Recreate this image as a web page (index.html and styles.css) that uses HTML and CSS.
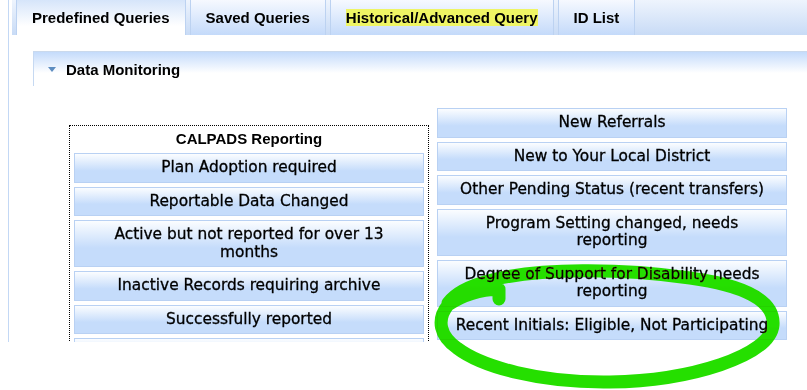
FILE: index.html
```html
<!DOCTYPE html>
<html lang="en">
<head>
    <meta charset="UTF-8">
    <meta name="viewport" content="width=device-width, initial-scale=1.0">
    <title>Predefined Queries</title>
    <link rel="stylesheet" href="styles.css">
</head>
<body>
    <div class="page">
        <div class="panel">
            <ul class="tabs">
                <li class="tab active">Predefined Queries</li>
                <li class="tab">Saved Queries</li>
                <li class="tab"><span class="mark">Historical/Advanced Query</span></li>
                <li class="tab">ID List</li>
            </ul>
            <div class="section-head"><span class="caret"></span>Data Monitoring</div>
            <div class="section-body">
                <div class="query-box">
                    <div class="query-title">CALPADS Reporting</div>
                    <button class="query">Plan Adoption required</button>
                    <button class="query">Reportable Data Changed</button>
                    <button class="query">Active but not reported for over 13 months</button>
                    <button class="query">Inactive Records requiring archive</button>
                    <button class="query">Successfully reported</button>
                    <button class="query stub"></button>
                </div>
                <div class="query-list">
                    <button class="query">New Referrals</button>
                    <button class="query">New to Your Local District</button>
                    <button class="query">Other Pending Status (recent transfers)</button>
                    <button class="query">Program Setting changed, needs reporting</button>
                    <button class="query">Degree of Support for Disability needs reporting</button>
                    <button class="query">Recent Initials: Eligible, Not Participating</button>
                </div>
            </div>
        </div>
    </div>

    <!-- hand drawn marker circle over the last query -->
    <svg class="annotation" width="807" height="390" viewBox="0 0 807 390">
        <path d="M 499 299 L 499 289 Q 470 290 448 305
                 C 436 320 440 336 457 348
                 C 482 367 540 383 610 382
                 C 690 381 770 356 773 325
                 C 775 300 742 285 690 278
                 C 620 268 540 268 492 280
                 C 472 285 456 292 448 303"/>
    </svg>
</body>
</html>
```

FILE: styles.css
```css
body {
    margin: 0;
    height: 390px;
    position: relative;
    background: #fff;
    font-family: "Liberation Sans", Arial, sans-serif;
    color: #000;
}
.page {
    height: 342px;
    overflow: hidden;
    padding-left: 8px;
}
.panel {
    height: 100%;
    border-left: 1px solid #c3d8f5;
    padding-left: 3px;
}
.tabs {
    display: flex;
    gap: 4px;
    height: 35px;
    margin: 0;
    padding: 0 0 0 4px;
    list-style: none;
    background: linear-gradient(to bottom, #eef4fd, #c8dbf6);
}
.tab {
    padding: 0 15px;
    line-height: 35px;
    font-size: 15px;
    font-weight: bold;
    border-left: 1px solid #bcd2f1;
    border-right: 1px solid #bcd2f1;
    background: linear-gradient(to bottom, #f6f9ff, #c4dafa);
}
.tab.active {
    background: linear-gradient(to bottom, #d6e5fa, #ffffff 75%);
}
.mark {
    background: #eff564;
}
.section-head {
    display: flex;
    align-items: center;
    height: 35px;
    box-sizing: border-box;
    margin: 16px 0 0 21px;
    padding-left: 14px;
    border-top: 1px solid #cad9ec;
    border-left: 1px solid #c6d9f2;
    background: linear-gradient(to bottom, #c4dbfb, #ffffff 62%);
    font-size: 15px;
    font-weight: bold;
}
.caret {
    width: 0;
    height: 0;
    margin-right: 10px;
    border-left: 4.5px solid transparent;
    border-right: 4.5px solid transparent;
    border-top: 5px solid #5d8dc0;
}
.section-body {
    display: flex;
    align-items: flex-start;
    gap: 8px;
    padding: 22px 0 0 57px;
}
.query-box {
    width: 360px;
    box-sizing: border-box;
    margin-top: 17px;
    padding: 4px 4px 0;
    border: 1px dotted #000;
}
.query-title {
    text-align: center;
    font-size: 15px;
    font-weight: bold;
    line-height: 18px;
    margin-bottom: 5px;
}
.query-list {
    width: 350px;
}
.query {
    display: block;
    width: 100%;
    margin: 0 0 4px;
    padding: 5px 14px;
    border: 1px solid #b9d1f3;
    border-radius: 0;
    background: linear-gradient(to bottom, #fbfdff, #c5dcfb 60%);
    font-family: "DejaVu Sans", Verdana, sans-serif;
    font-size: 15.4px;
    line-height: 17.5px;
    color: #000;
    -webkit-text-stroke: 0.3px #000;
    text-align: center;
    cursor: pointer;
}
.query.stub {
    height: 29.5px;
}
.annotation {
    position: absolute;
    top: 0;
    left: 0;
    pointer-events: none;
    mix-blend-mode: darken;
}
.annotation path {
    fill: none;
    stroke: #25df00;
    stroke-width: 13;
    stroke-linecap: round;
    stroke-linejoin: round;
}
```
